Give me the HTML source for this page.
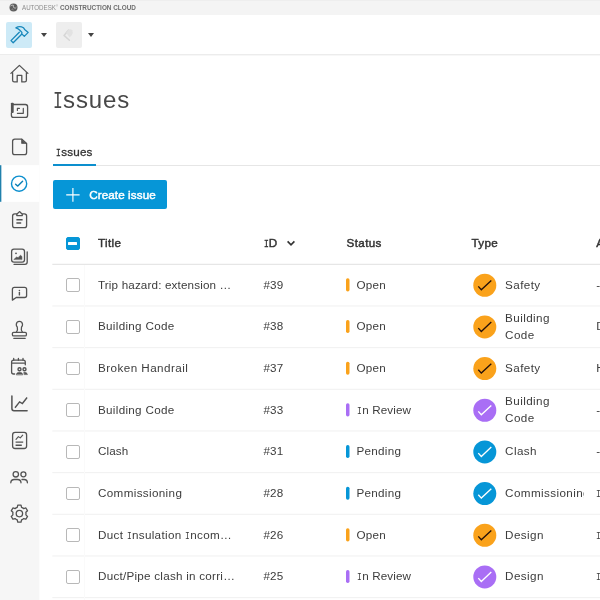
<!DOCTYPE html>
<html lang="en">
<head>
<meta charset="utf-8">
<title>Issues</title>
<style>
*{box-sizing:border-box;margin:0;padding:0}
html,body{width:600px;height:600px;overflow:hidden;background:#fff}
#gl{position:absolute;left:0;top:0;width:600px;height:600px;will-change:transform}
body{font-family:"Liberation Sans",sans-serif;color:#3c3c3c;position:relative}
.abs{position:absolute}
#brand{left:0;top:0;width:600px;height:15.3px;background:#f4f4f4;border-top:1px solid #eeeeee}
#brand .t1{left:22px;top:3px;font-size:7px;line-height:8px;color:#8c8c8c;white-space:nowrap;transform:scaleX(.886);transform-origin:0 0}
#brand .t2{left:59.8px;top:3px;font-size:7px;line-height:8px;font-weight:700;color:#6e6e6e;white-space:nowrap;transform:scaleX(.913);transform-origin:0 0}
#hdr{left:0;top:15px;width:600px;height:40px;background:#fff}
.tile{width:26px;height:26px;border-radius:2px;top:22px}
.caret{width:0;height:0;border-left:3.5px solid transparent;border-right:3.5px solid transparent;border-top:4px solid #444;top:33px}
h1{left:52.6px;top:85px;font-size:24px;line-height:30px;font-weight:400;letter-spacing:.9px;color:#484848;white-space:nowrap}
.si{font-family:"Liberation Mono",monospace;display:inline-block;transform:scaleX(.68);transform-origin:0 0;margin-right:-.167em;letter-spacing:0}
#tab{left:56.2px;top:144.5px;font-size:11.67px;line-height:14px;letter-spacing:.18px;color:#333;-webkit-text-stroke:.3px #333;white-space:nowrap}
#tabul{left:53px;top:164px;width:43px;height:2px;background:#0c8fce}
#tabline{left:96px;top:165px;width:504px;height:1px;background:#e6e6e6}
#btn{left:53px;top:180px;width:114px;height:29px;background:#0696d7;border-radius:2px;color:#fff;font-size:11.67px;font-weight:400;line-height:29px;letter-spacing:.1px;-webkit-text-stroke:.45px #fff}
#btn span{position:absolute;left:36.2px;top:0;white-space:nowrap}
.row{left:53px;width:547px;height:41.67px;font-size:11.67px;letter-spacing:.15px;white-space:nowrap;overflow:hidden}
.row>*{position:absolute}
.row .t{top:0;line-height:40.4px}
.row .two{line-height:16.6px;top:3.6px}
.hd .t{font-weight:400;font-size:11.67px;letter-spacing:.35px;color:#333;-webkit-text-stroke:.45px #333}
.cb{left:13px;top:13.7px;width:13.5px;height:13.5px;border:1px solid #b8b8b8;border-radius:2px;background:#fff}
.hc{background:#0696d7;border-color:#0696d7}
.hc:after{content:"";position:absolute;left:1.4px;top:4.6px;width:8.6px;height:2.2px;background:#fff;border-radius:.5px}
.c1{left:45px}.c2{left:210.4px}.c3{left:293.6px}.c3.s{left:303.4px;letter-spacing:.3px}.c4{left:452.1px;max-width:78.8px;overflow:hidden;letter-spacing:.4px}.c4h{left:418.4px}.c5{left:543.3px}
.chev{left:233px;top:14.7px;width:10px;height:10px;fill:none;stroke:#333;stroke-width:1.65;stroke-linecap:butt;stroke-linejoin:miter}
</style>
</head>
<body>
<div id="gl">
<div id="brand" class="abs">
  <svg class="abs" style="left:8.5px;top:1.6px" width="9" height="9" viewBox="0 0 9 9"><circle cx="4.5" cy="4.5" r="4" fill="#5e5e5e"/><path d="M1.4 3 Q3 1.4 4.6 2.4 Q3.8 4 5.2 5 Q6.6 5.6 7.4 4.2" stroke="#c8c8c8" stroke-width=".9" fill="none"/><path d="M2.6 6.6 Q3.6 5.6 4.4 6.8" stroke="#b0b0b0" stroke-width=".7" fill="none"/></svg>
  <div class="abs t1">AUTODESK<span style="font-size:2.6px;position:relative;top:-3.2px;margin-left:.4px">®</span></div><div class="abs t2">CONSTRUCTION CLOUD</div>
</div>
<div id="hdr" class="abs"></div>
<div class="abs tile" style="left:6px;background:#cdeaf7"></div>
<div class="abs caret" style="left:41px"></div>
<div class="abs tile" style="left:56px;background:#eeeeee"></div>
<div class="abs caret" style="left:88px"></div>

<svg class="abs" id="topic" style="left:0;top:16px" width="100" height="39" viewBox="0 16 100 39" fill="none" stroke-linecap="round" stroke-linejoin="round">
<path d="M19.3 32.2 L11 40.6 L13.2 42.8 L21.4 34.5" stroke="#1787bb" stroke-width="1.3"/>
<path d="M15.9 27.9 Q19.6 25.4 23.4 27.7 L24.6 29.4 L28.2 32.4 L24.3 36.4 L21.7 33.8 L21.9 32.4 L19.6 30 Q17.8 28.4 15.9 27.9 Z" stroke="#1787bb" stroke-width="1.3"/>
<path d="M68.6 30 L64 35.4 L69.4 40.2" stroke="#d6d6d6" stroke-width="1.5"/>
<path d="M68.2 30.2 Q70.5 28.3 72.2 30.3 Q73.6 32.6 71.6 35.2 L69.6 37.4 Q67.4 34.6 66.2 32.8 Z" fill="#e2e2e2" stroke="none"/>
</svg>

<svg class="abs" id="hline" style="left:0;top:50px" width="600" height="10" viewBox="0 50 600 10"><rect x="0" y="54.3" width="600" height="1" fill="#e4e4e4"/></svg>
<svg class="abs" id="sideic" style="left:0;top:0" width="40" height="600" viewBox="0 0 40 600" fill="none" stroke="#535353" stroke-width="1.3" stroke-linecap="round" stroke-linejoin="round">
<rect x="0" y="55" width="39.3" height="545" fill="#f6f6f6" stroke="none"/>
<rect x="0" y="165.2" width="39.3" height="36.6" fill="#fff" stroke="none"/>
<rect x="0" y="165.2" width="1.35" height="36.6" fill="#2181ac" stroke="none"/>
<!-- home -->
<path d="M10.9 73.4 L19.4 65.4 L27.9 73.4"/>
<path d="M12.6 72.6 V80.3 Q12.6 81.9 14.2 81.9 H17.2 V75.4 H21.8 V81.9 H24.8 Q26.4 81.9 26.4 80.3 V72.6"/>
<!-- sheets -->
<path d="M13.2 104.5 H25.4 Q27.6 104.5 27.6 106.7 V115.2 Q27.6 117.4 25.4 117.4 H13.6 Q11.4 117.4 11.4 115.2 V113"/>
<rect x="10.9" y="102.7" width="2.8" height="10.2" rx=".9" fill="#535353" stroke="none"/>
<path d="M19.4 108.4 H17.4 V110.4 M23.3 108.4 V113.3 H17.4" stroke-width="1.2"/>
<!-- file -->
<path d="M21.6 139.1 H14.8 Q12.6 139.1 12.6 141.3 V152.4 Q12.6 154.6 14.8 154.6 H24.4 Q26.6 154.6 26.6 152.4 V143.6 Z"/>
<path d="M21.6 139.6 V143.4 H26 Z" fill="#535353" stroke-width=".8"/>
<!-- issues (active) -->
<circle cx="19.1" cy="183.7" r="7.6" stroke="#0c8fce" stroke-width="1.4"/>
<path d="M15.6 184.3 L17.8 186.1 L22.6 181.2" stroke="#0b7fb5" stroke-width="1.4"/>
<!-- forms clipboard -->
<path d="M16.6 213.9 H14.8 Q12.6 213.9 12.6 216.1 V225.5 Q12.6 227.7 14.8 227.7 H24.4 Q26.6 227.7 26.6 225.5 V216.1 Q26.6 213.9 24.4 213.9 H22.6"/>
<path d="M16.8 215.6 V214.2 L19.5 211.6 L22.3 214.2 V215.6 Z"/>
<path d="M16.4 219.7 H22.6 M16.4 222.9 H21.2" stroke-width="1.5" stroke-linecap="butt"/>
<!-- photos -->
<rect x="11.6" y="249.2" width="12.9" height="12.9" rx="2.3"/>
<path d="M27.2 251.8 V262 Q27.2 264.3 24.9 264.3 H14"/>
<path d="M14.1 259.3 L16.6 257 L18 257.7 L20.5 255.2 L21.9 256.5 V259.3 Z" fill="#535353" stroke-width=".6"/>
<circle cx="16" cy="253.3" r=".9" fill="#535353" stroke="none"/>
<!-- rfi bubble -->
<path d="M12.4 300.1 V289.4 Q12.4 287.4 14.4 287.4 H24.6 Q26.6 287.4 26.6 289.4 V295.5 Q26.6 297.5 24.6 297.5 H16.2 Z"/>
<path d="M19.4 292.4 V294.9" stroke-width="1.4"/>
<circle cx="19.4" cy="290.5" r=".8" fill="#535353" stroke="none"/>
<!-- stamp -->
<path d="M16.3 332.3 Q18.1 329.5 17.3 327.2 Q16.1 325.6 16.3 324.3 Q16.6 321.3 19.4 321.3 Q22.2 321.3 22.5 324.3 Q22.7 325.6 21.5 327.2 Q20.7 329.5 22.5 332.3"/>
<rect x="12.4" y="332.4" width="14" height="3.5" rx="1.2"/>
<path d="M13.8 338.3 H25.2"/>
<!-- meetings calendar -->
<path d="M14.6 374 H13.6 Q11.6 374 11.6 372 V362.2 Q11.6 360.2 13.6 360.2 H23.3 Q25.3 360.2 25.3 362.2 V364.8 M11.6 363.2 H25.3"/>
<path d="M13.7 358.4 V360.2 M18.4 358.4 V360.2 M23 358.4 V360.2"/>
<circle cx="19.5" cy="369.3" r="1.5" stroke-width="1.4"/>
<circle cx="24.5" cy="369.3" r="1.5" stroke-width="1.4"/>
<path d="M16.3 374.6 Q16.5 372.2 19.5 372.2 Q22.5 372.2 22.7 374.6 Z" fill="#535353" stroke-width=".5"/>
<path d="M24 372.3 Q27.2 372 27.5 374.6 H24.3 Z" fill="#535353" stroke-width=".5"/>
<!-- insight chart -->
<path d="M11.9 395.9 V408.6 Q11.9 410.7 14 410.7 H27.1" stroke-width="1.5"/>
<path d="M15 407.7 L19.6 401.8 L22.4 403.5 L27.1 397.5" stroke-width="1.4" stroke-linecap="butt" stroke-linejoin="miter"/>
<!-- reports -->
<rect x="12.6" y="432.4" width="14" height="16.1" rx="2.5"/>
<path d="M16 439.4 L18.4 436.6 L20.3 437.9 L22.7 435.2" stroke-width="1.1"/>
<path d="M15.6 442.1 H23.2 M15.6 445.3 H21.8" stroke-width="1.4" stroke-linecap="butt"/>
<!-- members -->
<circle cx="15.8" cy="474.3" r="2.7"/>
<circle cx="23.4" cy="474.3" r="2.5"/>
<path d="M10.8 482.8 Q10.8 479.5 14.3 479.5 H17.5 Q21 479.5 21 482.8"/>
<path d="M22 479.5 H24 Q27.4 479.5 27.4 482.8"/>
<!-- settings -->
<path d="M22.70 507.88 L21.55 507.36 Q21.29 506.26 21.04 505.16 L17.76 505.16 L17.25 507.36 L16.10 507.88 L15.07 508.62 Q13.99 508.29 12.91 507.96 L11.27 510.80 L12.92 512.34 L12.80 513.60 L12.92 514.86 Q12.09 515.63 11.27 516.40 L12.91 519.24 L15.07 518.58 L16.10 519.32 L17.25 519.84 Q17.51 520.94 17.76 522.04 L21.04 522.04 L21.55 519.84 L22.70 519.32 L23.73 518.58 Q24.81 518.91 25.89 519.24 L27.53 516.40 L25.88 514.86 L26.00 513.60 L25.88 512.34 Q26.71 511.57 27.53 510.80 L25.89 507.96 L23.73 508.62 L22.70 507.88Z" stroke-width="1.3"/>
<circle cx="19.4" cy="513.6" r="3.2"/>
</svg>
<h1 class="abs"><span class="si">I</span>ssues</h1>
<div id="tab" class="abs"><span class="si">I</span>ssues</div>
<div id="tabul" class="abs"></div>
<div id="tabline" class="abs"></div>
<div id="btn" class="abs"><svg class="abs" style="left:12.6px;top:8px" width="14" height="14" viewBox="0 0 14 14" stroke="#fff" stroke-width="1.15" fill="none"><path d="M.2 6.9 H13.6 M6.9 .1 V13.8"/></svg><span>Create issue</span></div>

<div id="rows">
<svg class="abs" style="left:0;top:0" width="600" height="600" viewBox="0 0 600 600">
<rect x="52.3" y="263.80" width="547.7" height="1" fill="#e0e0e0"/>
<rect x="52.3" y="305.47" width="547.7" height="1" fill="#f0f0f0"/>
<rect x="52.3" y="347.13" width="547.7" height="1" fill="#f0f0f0"/>
<rect x="52.3" y="388.80" width="547.7" height="1" fill="#f0f0f0"/>
<rect x="52.3" y="430.47" width="547.7" height="1" fill="#f0f0f0"/>
<rect x="52.3" y="472.13" width="547.7" height="1" fill="#f0f0f0"/>
<rect x="52.3" y="513.80" width="547.7" height="1" fill="#f0f0f0"/>
<rect x="52.3" y="555.47" width="547.7" height="1" fill="#f0f0f0"/>
<rect x="52.3" y="597.14" width="547.7" height="1" fill="#f0f0f0"/>
<rect x="84" y="265" width="1" height="335" fill="#fafafa"/>
<rect x="346" y="278.30" width="3.5" height="13.1" rx="1.7" fill="#faa21b"/>
<circle cx="484.8" cy="285.25" r="11.5" fill="#faa21b"/>
<path d="M478.30 286.42 L481.30 289.75 L491.30 280.42" fill="none" stroke="#24100a" stroke-width="1.35"/>
<rect x="346" y="319.97" width="3.5" height="13.1" rx="1.7" fill="#faa21b"/>
<circle cx="484.8" cy="326.92" r="11.5" fill="#faa21b"/>
<path d="M478.30 328.09 L481.30 331.42 L491.30 322.09" fill="none" stroke="#24100a" stroke-width="1.35"/>
<rect x="346" y="361.63" width="3.5" height="13.1" rx="1.7" fill="#faa21b"/>
<circle cx="484.8" cy="368.58" r="11.5" fill="#faa21b"/>
<path d="M478.30 369.75 L481.30 373.08 L491.30 363.75" fill="none" stroke="#24100a" stroke-width="1.35"/>
<rect x="346" y="403.30" width="3.5" height="13.1" rx="1.7" fill="#a96ef5"/>
<circle cx="484.8" cy="410.25" r="11.5" fill="#a96ef5"/>
<path d="M478.30 411.42 L481.30 414.75 L491.30 405.42" fill="none" stroke="#ffffff" stroke-width="1.35"/>
<rect x="346" y="444.97" width="3.5" height="13.1" rx="1.7" fill="#0696d7"/>
<circle cx="484.8" cy="451.92" r="11.5" fill="#0696d7"/>
<path d="M478.30 453.09 L481.30 456.42 L491.30 447.09" fill="none" stroke="#ffffff" stroke-width="1.35"/>
<rect x="346" y="486.63" width="3.5" height="13.1" rx="1.7" fill="#0696d7"/>
<circle cx="484.8" cy="493.58" r="11.5" fill="#0696d7"/>
<path d="M478.30 494.75 L481.30 498.08 L491.30 488.75" fill="none" stroke="#ffffff" stroke-width="1.35"/>
<rect x="346" y="528.30" width="3.5" height="13.1" rx="1.7" fill="#faa21b"/>
<circle cx="484.8" cy="535.25" r="11.5" fill="#faa21b"/>
<path d="M478.30 536.42 L481.30 539.75 L491.30 530.42" fill="none" stroke="#24100a" stroke-width="1.35"/>
<rect x="346" y="569.97" width="3.5" height="13.1" rx="1.7" fill="#a96ef5"/>
<circle cx="484.8" cy="576.92" r="11.5" fill="#a96ef5"/>
<path d="M478.30 578.09 L481.30 581.42 L491.30 572.09" fill="none" stroke="#ffffff" stroke-width="1.35"/>
</svg>
<div class="abs row hd" style="top:223.13px"><i class="cb hc"></i><span class="c1 t">Title</span><span class="c2 t" style="left:210.9px"><span class="si" style="margin-right:-.18em">I</span>D</span><svg class="chev" viewBox="0 0 10 10"><path d="M1.6 3.4 L5 6.8 L8.4 3.4"/></svg><span class="c3 t">Status</span><span class="c4h t">Type</span><span class="c5 t">Assigned to</span></div>
<div class="abs row" style="top:264.80px"><i class="cb"></i><span class="c1 t" style="letter-spacing:0.15px">Trip hazard: extension …</span><span class="c2 t">#39</span><span class="c3 t s">Open</span><span class="c4 t">Safety</span><span class="c5 t">--</span></div>
<div class="abs row" style="top:306.47px"><i class="cb"></i><span class="c1 t" style="letter-spacing:0.3px">Building Code</span><span class="c2 t">#38</span><span class="c3 t s">Open</span><span class="c4 t two">Building<br>Code</span><span class="c5 t">David Kim</span></div>
<div class="abs row" style="top:348.13px"><i class="cb"></i><span class="c1 t" style="letter-spacing:0.45px">Broken Handrail</span><span class="c2 t">#37</span><span class="c3 t s">Open</span><span class="c4 t">Safety</span><span class="c5 t">Henry Lo</span></div>
<div class="abs row" style="top:389.80px"><i class="cb"></i><span class="c1 t" style="letter-spacing:0.3px">Building Code</span><span class="c2 t">#33</span><span class="c3 t s" style="left:304.2px;letter-spacing:.12px"><span class="si">I</span>n Review</span><span class="c4 t two">Building<br>Code</span><span class="c5 t">--</span></div>
<div class="abs row" style="top:431.47px"><i class="cb"></i><span class="c1 t" style="letter-spacing:0.1px">Clash</span><span class="c2 t">#31</span><span class="c3 t s">Pending</span><span class="c4 t">Clash</span><span class="c5 t">--</span></div>
<div class="abs row" style="top:473.13px"><i class="cb"></i><span class="c1 t" style="letter-spacing:0.35px">Commissioning</span><span class="c2 t">#28</span><span class="c3 t s">Pending</span><span class="c4 t">Commissioning</span><span class="c5 t"><span class="si">I</span>an Shaw</span></div>
<div class="abs row" style="top:514.80px"><i class="cb"></i><span class="c1 t" style="letter-spacing:0.33px">Duct <span class="si">I</span>nsulation <span class="si">I</span>ncom…</span><span class="c2 t">#26</span><span class="c3 t s">Open</span><span class="c4 t">Design</span><span class="c5 t"><span class="si">I</span>an Shaw</span></div>
<div class="abs row" style="top:556.47px"><i class="cb"></i><span class="c1 t" style="letter-spacing:0.25px">Duct/Pipe clash in corri…</span><span class="c2 t">#25</span><span class="c3 t s" style="left:304.2px;letter-spacing:.12px"><span class="si">I</span>n Review</span><span class="c4 t">Design</span><span class="c5 t"><span class="si">I</span>an Shaw</span></div>
</div><!--/rows-->
</div>
</body>
</html>
